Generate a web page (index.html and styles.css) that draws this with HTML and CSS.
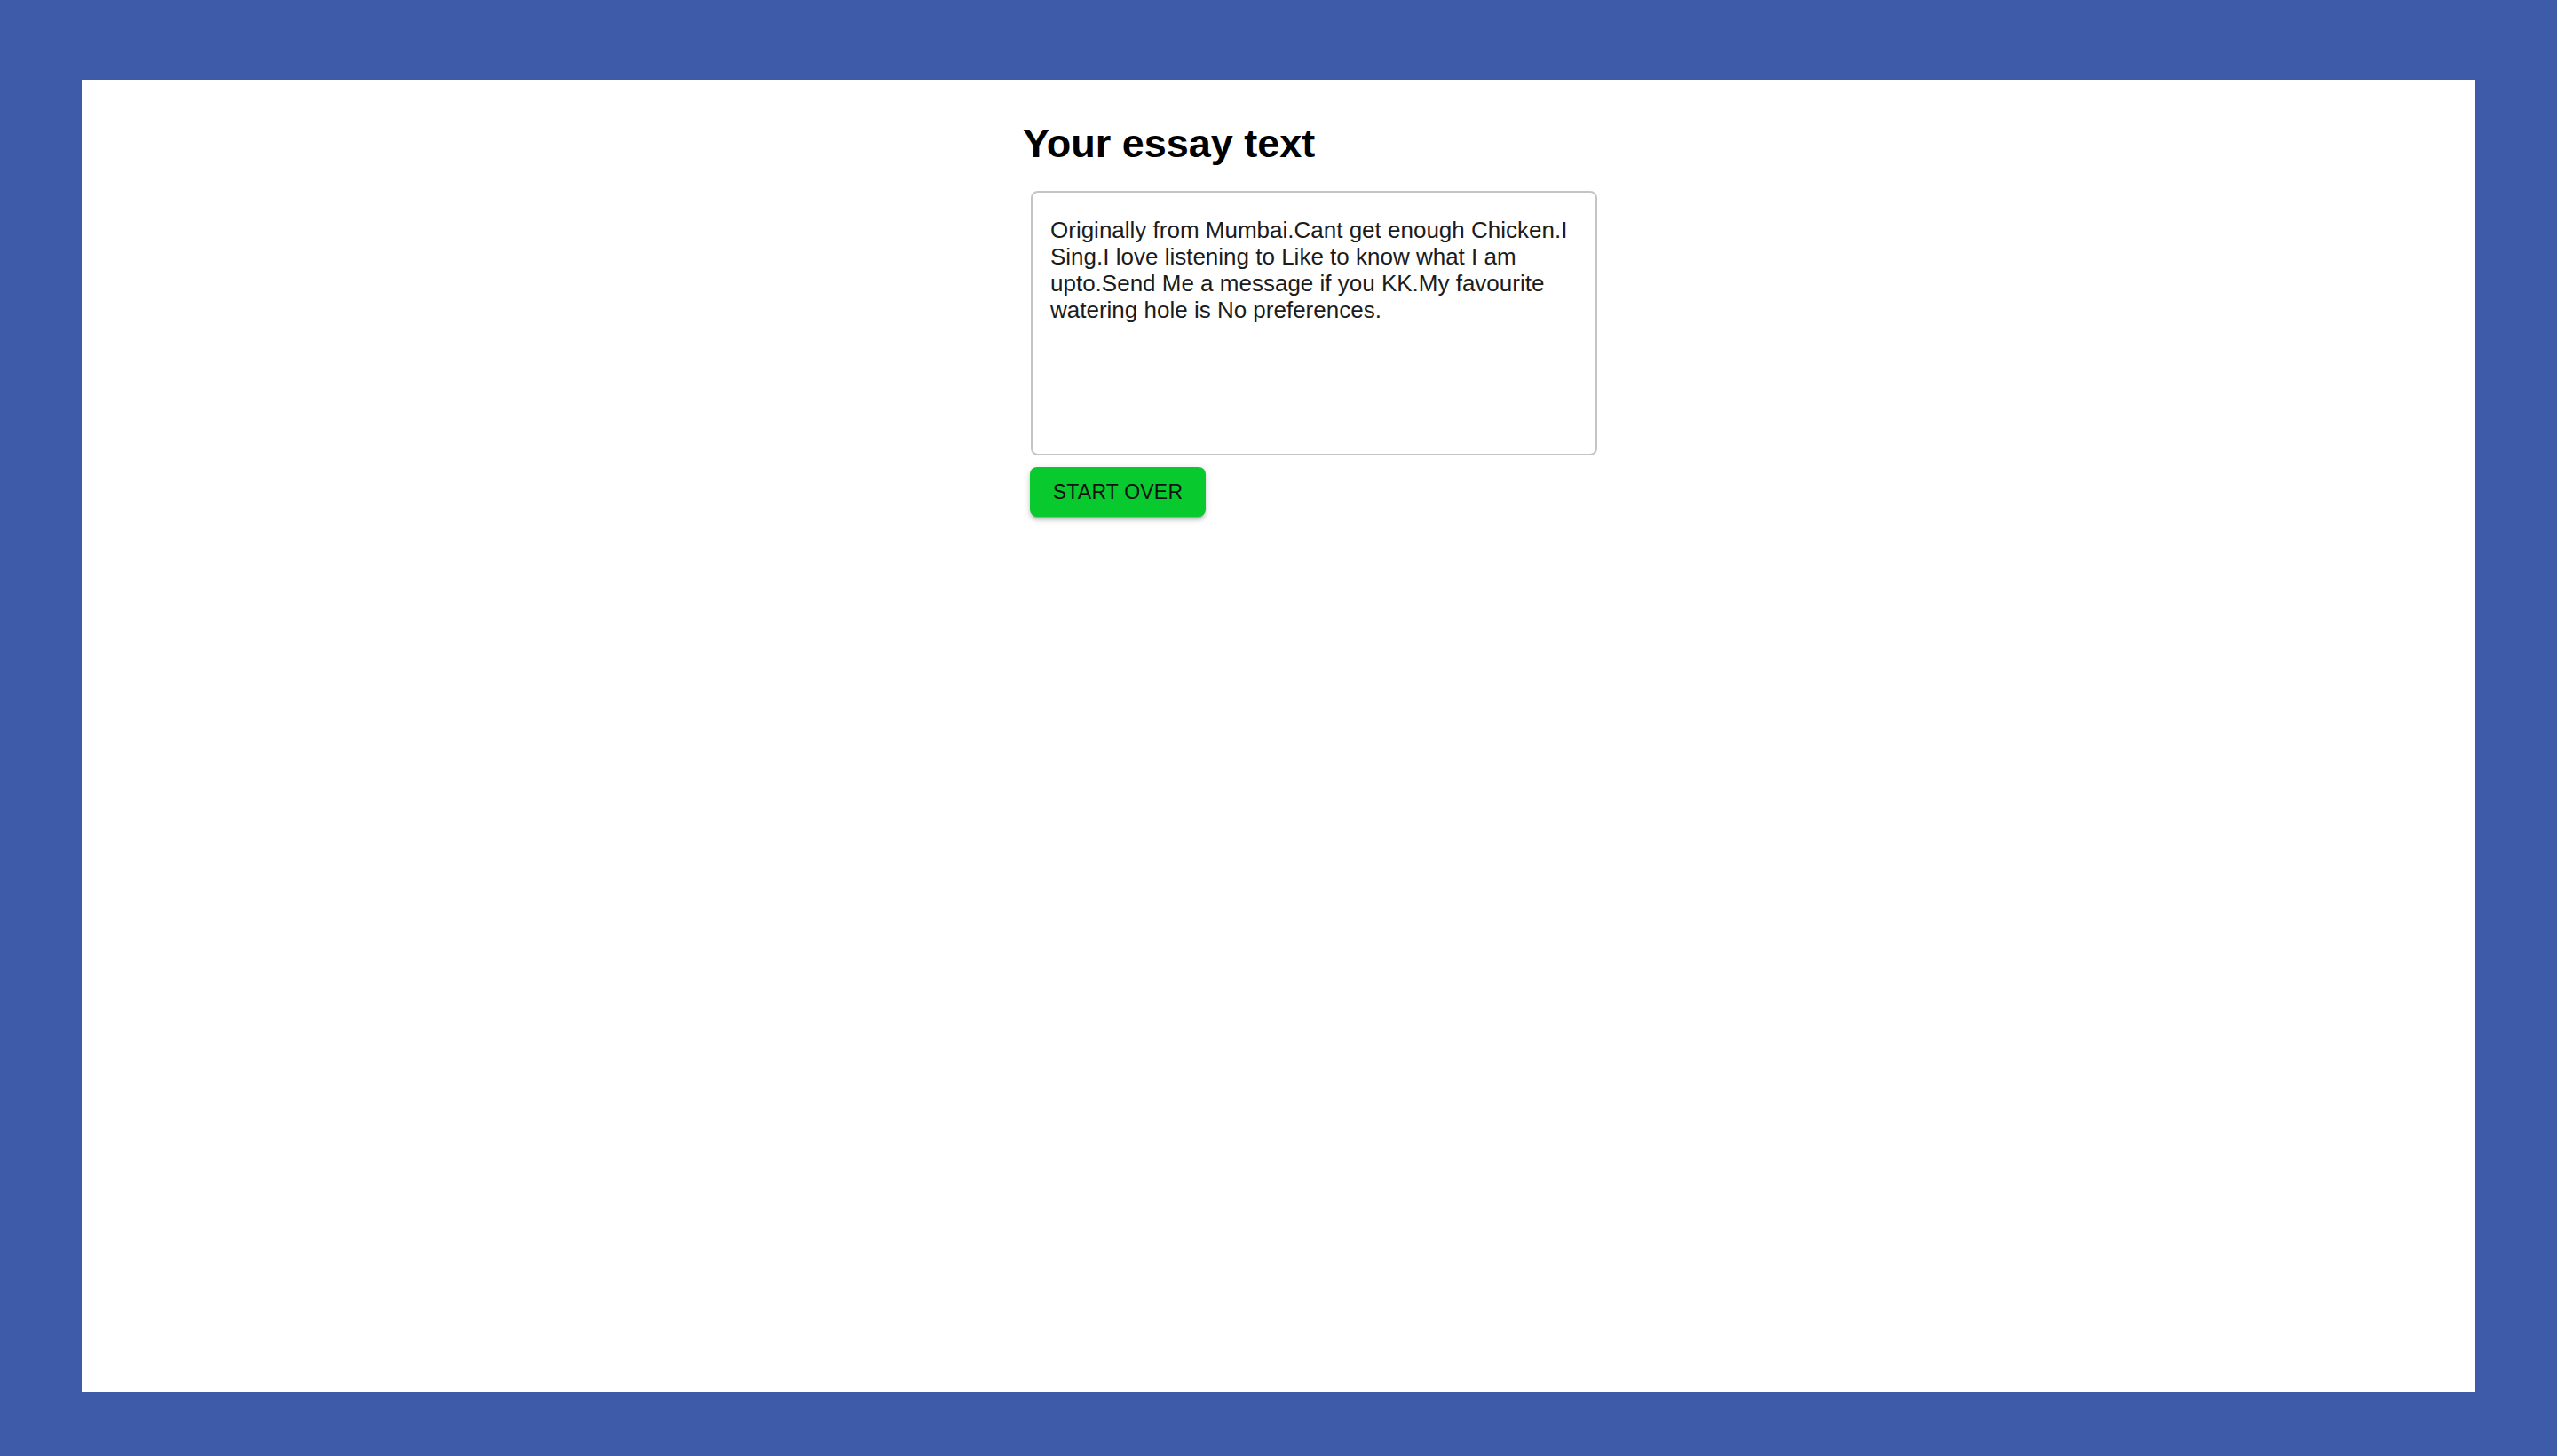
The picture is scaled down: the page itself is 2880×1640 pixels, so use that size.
FILE: index.html
```html
<!DOCTYPE html>
<html lang="en">
<head>
<meta charset="utf-8">
<title>Your essay text</title>
<link rel="stylesheet" href="styles.css">
</head>
<body>
<main class="panel">
  <section class="essay">
    <h2 class="essay-title">Your essay text</h2>
    <textarea class="essay-text" readonly>Originally from Mumbai.Cant get enough Chicken.I Sing.I love listening to Like to know what I am upto.Send Me a message if you KK.My favourite watering hole is No preferences.</textarea>
    <button class="btn-start" type="button">START OVER</button>
  </section>
</main>
</body>
</html>
```

FILE: styles.css
```css
html, body {
  margin: 0;
  padding: 0;
}
body {
  background: #3e5ba9;
  padding: 90px 92px 0;
  height: 1640px;
  box-sizing: border-box;
  font-family: "Liberation Sans", Arial, Helvetica, sans-serif;
}
.panel {
  background: #ffffff;
  height: 1478px;
  display: flex;
  justify-content: center;
}
.essay {
  width: 576px;
  display: flex;
  flex-direction: column;
  align-items: flex-start;
  padding-top: 47px;
}
.essay-title {
  margin: 0 0 28px 0;
  font-size: 45px;
  line-height: 50px;
  font-weight: 700;
  color: #000;
}
.essay-text {
  margin: 0 0 0 9px;
  width: 638px;
  height: 298px;
  flex: none;
  box-sizing: border-box;
  border: 2px solid #c4c4c4;
  border-radius: 8px;
  padding: 27px 20px 20px 20px;
  font-family: "Liberation Sans", Arial, Helvetica, sans-serif;
  font-size: 26px;
  line-height: 30px;
  color: #1c1c1c;
  resize: none;
  outline: none;
  overflow: hidden;
  background: #fff;
}
.btn-start {
  margin: 13px 0 0 8px;
  width: 198px;
  height: 56px;
  border: none;
  border-radius: 8px;
  background: #08c92e;
  color: #111;
  font-family: "Liberation Sans", Arial, Helvetica, sans-serif;
  font-size: 23px;
  letter-spacing: 0.2px;
  padding: 0;
  box-shadow: 0 6px 2px -4px rgba(0,0,0,0.2), 0 4px 4px rgba(0,0,0,0.14), 0 2px 10px rgba(0,0,0,0.12);
  cursor: pointer;
}
```
